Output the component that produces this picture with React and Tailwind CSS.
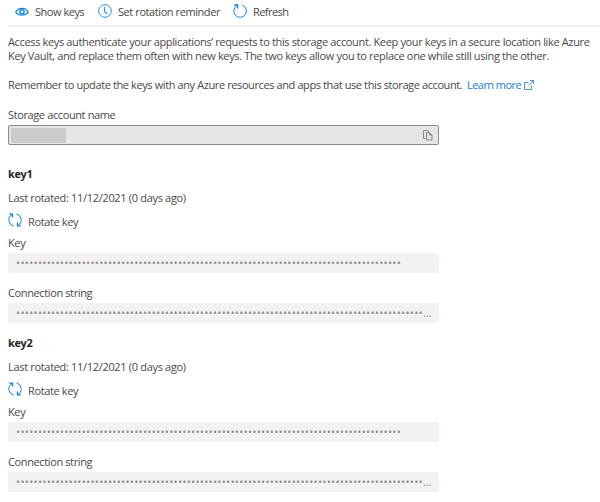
const EyeIcon = () => (
  <svg width="14" height="10" viewBox="0 0 14 10" fill="none" stroke="#1683d8" className="-mt-[2px]">
    <path d="M.7 5.2C2 2.6 4.2 1.4 7 1.4s5 1.2 6.3 3.8C11.900 7 9.800 8.200 7 8.200S2.100 7 .7 5.200Z" strokeWidth="1.1" />
    <circle cx="7" cy="4.800" r="2.100" strokeWidth="1.500" />
  </svg>
);

const ClockIcon = () => (
  <svg width="14" height="14" viewBox="0 0 14 14" fill="none" stroke="#2b8edb" className="-mt-[3px]">
    <circle cx="7" cy="7" r="6.300" strokeWidth="1" />
    <path d="M6.500 3v4.500l2.800 2.500" strokeWidth="1.100" />
  </svg>
);

const RefreshIcon = () => (
  <svg width="14" height="14" viewBox="0 0 14 14" fill="none" stroke="#1683d8" className="-mt-[3px]">
    <path d="M9.300 1.100A6.300 6.300 0 1 1 4.300 1.400" strokeWidth="1" />
    <path d="M1.200 1h3.400v3.400" strokeWidth="1.300" />
  </svg>
);

const RotateIcon = () => (
  <svg width="14" height="14" viewBox="0 0 14 14" fill="none" stroke="#1683d8">
    <path d="M4.300 1.400A6.300 6.300 0 0 0 5.500 13.100M8.500 .9A6.300 6.300 0 0 1 9.700 12.600" strokeWidth="1" />
    <path d="M1.200 1.200h3.300v3.300M12.800 12.800H9.500V9.500" strokeWidth="1.300" />
  </svg>
);

const ExternalIcon = () => (
  <svg width="10" height="10" viewBox="0 0 10 10" fill="none" stroke="#4b8fe0" strokeWidth="1">
    <path d="M4.500 2.500h-4v7h7v-4M6 .5h3.500V4M9.500.5 4.500 5.500" />
  </svg>
);

const CopyIcon = () => (
  <svg width="10" height="11" viewBox="0 0 10 11" fill="none" stroke="#858585" strokeWidth="1">
    <path d="M2.500 8.500h-2v-8h4l1.500 1.500" />
    <path d="M3.500 2.500h3l2.500 2.500v5H3.500zM6.500 2.500V5H9" />
  </svg>
);

const Masked = ({ count, more }) => (
  <div className="flex h-5 w-[431px] items-center rounded-[2px] bg-[#f3f2f1] pl-[8px] text-[11px] leading-5 text-[#93918f]">
    <span className="tracking-[0.24px]">{"•".repeat(count)}</span>
    {more && <span className="tracking-[-0.1px]">...</span>}
  </div>
);

const KeyGroup = ({ name }) => (
  <section className="h-[169px]">
    <h2 className="h-[24px] text-[11px] leading-4 font-bold text-[#292827]">{name}</h2>
    <p className="h-[23px] leading-4 tracking-[-0.32px]">Last rotated: 11/12/2021 (0 days ago)</p>
    <div className="flex h-[22px] items-start leading-4">
      <RotateIcon />
      <span className="mt-px ml-[6px]">Rotate key</span>
    </div>
    <div className="h-[18px] leading-4">Key</div>
    <Masked count={88} />
    <div className="mt-3 h-[18px] leading-4">Connection string</div>
    <Masked count={93} more />
  </section>
);

export default function App() {
  return (
    <main className="h-[502px] w-[600px] overflow-hidden bg-white pl-2 font-['Open_Sans','Noto_Sans',sans-serif] text-[11px] tracking-[-0.38px] whitespace-nowrap text-[#4a4948]">
      <nav className="flex h-[27px] items-center border-b-2 border-[#f0f0f0] pl-[7px] leading-4">
        <EyeIcon />
        <span className="-mt-px ml-[6px] w-[63px] tracking-[-0.46px]">Show keys</span>
        <ClockIcon />
        <span className="-mt-px ml-[6px] w-[115px] tracking-[-0.42px]">Set rotation reminder</span>
        <RefreshIcon />
        <span className="-mt-px ml-[6px] tracking-[-0.55px]">Refresh</span>
      </nav>
      <p className="mt-2 leading-[14px] tracking-[-0.355px]">
        <span className="block">Access keys authenticate your applications’ requests to this storage account. Keep your keys in a secure location like Azure</span>
        <span className="block">Key Vault, and replace them often with new keys. The two keys allow you to replace one while still using the other.</span>
      </p>
      <p className="mt-[14px] flex h-4 items-center leading-4">
        <span className="w-[459px] tracking-[-0.395px]">Remember to update the keys with any Azure resources and apps that use this storage account.</span>
        <a className="flex items-center gap-[3px] tracking-[-0.55px] text-[#1a7cd0]">Learn more <ExternalIcon /></a>
      </p>
      <div className="mt-[14px] h-[18px] leading-4">Storage account name</div>
      <div className="flex h-5 w-[431px] items-center justify-between rounded-[2px] border border-[#8c8b89] bg-[#e6e6e6] pr-[5px] pl-[2px]">
        <div className="h-[15px] w-[55px] bg-[#cbcbcb]" />
        <CopyIcon />
      </div>
      <div className="mt-[21px]">
        <KeyGroup name="key1" />
        <KeyGroup name="key2" />
      </div>
    </main>
  );
}
